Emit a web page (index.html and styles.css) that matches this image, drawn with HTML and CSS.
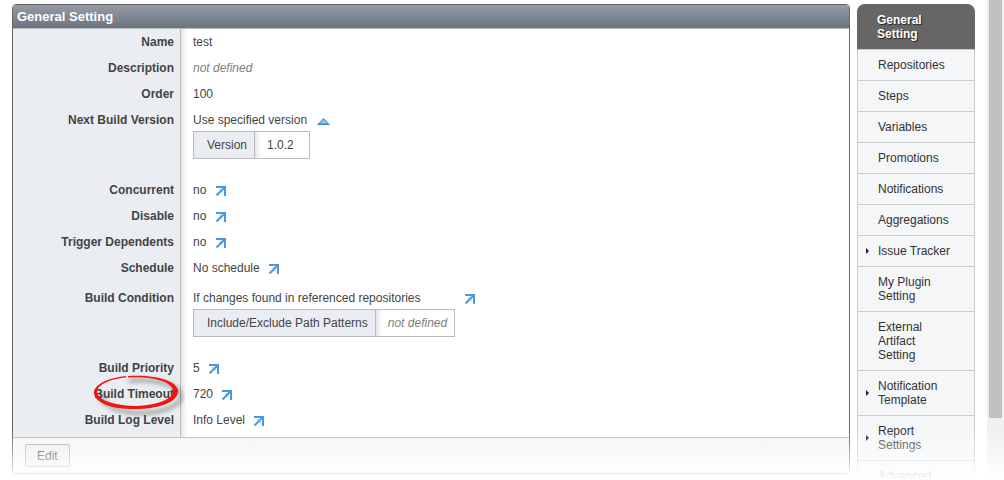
FILE: index.html
```
<!DOCTYPE html>
<html lang="en">
<head>
    <meta charset="UTF-8">
    <meta name="viewport" content="width=device-width, initial-scale=1.0">
    <title>General Setting</title>
    <link rel="stylesheet" href="styles.css">
</head>
<body>
    <svg class="sprite" aria-hidden="true">
        <symbol id="arrow" viewBox="0 0 10 10">
            <path d="M2 3H7V8Z" fill="#cfe4f8"/>
            <path d="M0 1H9V10M8.5 1.5L0.500 9.500" fill="none" stroke="#4a98e4" stroke-width="2"/>
        </symbol>
    </svg>

    <div class="page">
        <main class="panel">
            <h1 class="panel-title">General Setting</h1>
            <table class="settings">
                <tr><th scope="row">Name</th><td>test</td></tr>
                <tr><th scope="row">Description</th><td><em class="empty">not defined</em></td></tr>
                <tr><th scope="row">Order</th><td>100</td></tr>
                <tr>
                    <th scope="row">Next Build Version</th>
                    <td>
                        Use specified version
                        <a class="toggle" href="#version" aria-label="Collapse">
                            <svg viewBox="0 0 13 7"><path d="M0 7L6.5 0L13 7Z" fill="#4189c4"/><path d="M2.500 5.500L6.500 1.300L10.500 5.500Z" fill="#8ccbf0"/></svg>
                        </a>
                        <table class="nested" id="version">
                            <tr><th scope="row">Version</th><td>1.0.2</td></tr>
                        </table>
                    </td>
                </tr>
                <tr><th scope="row">Concurrent</th><td>no <a class="jump" href="#" aria-label="Override"><svg><use href="#arrow"/></svg></a></td></tr>
                <tr><th scope="row">Disable</th><td>no <a class="jump" href="#" aria-label="Override"><svg><use href="#arrow"/></svg></a></td></tr>
                <tr><th scope="row">Trigger Dependents</th><td>no <a class="jump" href="#" aria-label="Override"><svg><use href="#arrow"/></svg></a></td></tr>
                <tr><th scope="row">Schedule</th><td>No schedule <a class="jump" href="#" aria-label="Override"><svg><use href="#arrow"/></svg></a></td></tr>
                <tr class="condition">
                    <th scope="row">Build Condition</th>
                    <td>
                        <div class="inherited">
                            <div>
                                If changes found in referenced repositories
                                <table class="nested">
                                    <tr><th scope="row">Include/Exclude Path Patterns</th><td><em class="empty">not defined</em></td></tr>
                                </table>
                            </div>
                            <a class="jump" href="#" aria-label="Override"><svg><use href="#arrow"/></svg></a>
                        </div>
                    </td>
                </tr>
                <tr><th scope="row">Build Priority</th><td>5 <a class="jump" href="#" aria-label="Override"><svg><use href="#arrow"/></svg></a></td></tr>
                <tr>
                    <th scope="row">
                        <span class="marked">Build Timeout
                            <svg class="marker" viewBox="0 0 92 44" aria-hidden="true">
                                <path class="marker-shadow" d="M36 8C62 5 87 12 88 23C89 34 64 41 43 40C23 39 7 31 8 20"/>
                                <path d="M33 3C13 5 1 12 1 20C2 31 22 37 46 36C68 35 85 29 85 18C85 8 62 1 35 3L35 4.500C60 3 80 9 80 18C80 27 62 32 44 33C24 33 6 28 4 20C3 13 15 6 33 4.500Z" fill="#f3130f"/>
                            </svg>
                        </span>
                    </th>
                    <td>720 <a class="jump" href="#" aria-label="Override"><svg><use href="#arrow"/></svg></a></td>
                </tr>
                <tr><th scope="row">Build Log Level</th><td>Info Level <a class="jump" href="#" aria-label="Override"><svg><use href="#arrow"/></svg></a></td></tr>
            </table>
            <div class="panel-footer">
                <button type="button" class="edit-btn">Edit</button>
            </div>
        </main>

        <nav class="side">
            <a class="active" href="#">General Setting</a>
            <a href="#">Repositories</a>
            <a href="#">Steps</a>
            <a href="#">Variables</a>
            <a href="#">Promotions</a>
            <a href="#">Notifications</a>
            <a href="#">Aggregations</a>
            <a class="parent" href="#">Issue Tracker</a>
            <a href="#">My Plugin Setting</a>
            <a href="#">External Artifact Setting</a>
            <a class="parent" href="#">Notification Template</a>
            <a class="parent" href="#">Report Settings</a>
            <a href="#">Advanced</a>
        </nav>

        <div class="scroll-track"><div class="scroll-thumb"></div></div>
    </div>
</body>
</html>
```

FILE: styles.css
```
body {
    margin: 0;
    background: #fff;
    color: #444;
    font-family: Arial, "Liberation Sans", sans-serif;
    font-size: 12px;
    line-height: 14px;
}
a {
    color: inherit;
    text-decoration: none;
}
.sprite {
    display: none;
}
.page {
    position: relative;
    display: flex;
    align-items: flex-start;
    height: 100vh;
    padding-left: 12px;
    box-sizing: border-box;
    overflow: hidden;
}
/* fade out at the bottom edge */
.page::after {
    content: "";
    position: absolute;
    left: 0;
    right: 0;
    bottom: 0;
    height: 50px;
    background: linear-gradient(rgba(255,255,255,0), #fff);
    pointer-events: none;
}

/* main panel */
.panel {
    flex: 1;
    margin-top: 4px;
    border: 1px solid #666;
    border-radius: 4px;
    overflow: hidden;
}
.panel-title {
    margin: 0;
    padding: 3px 4px;
    border-bottom: 1px solid #bbb;
    background: linear-gradient(#969ca6, #6b747f);
    color: #fff;
    font-size: 13px;
    line-height: 17px;
}
.settings {
    width: 100%;
    border-collapse: separate;
    border-spacing: 0;
    border-bottom: 1px solid #bbb;
}
.settings th,
.settings td {
    padding: 6px;
    vertical-align: top;
}
.settings th {
    border-right: 1px solid #bbb;
    background: #eaedf2;
}
.settings td {
    padding-left: 12px;
    background: linear-gradient(90deg, #e4e4e4, #fff 6px);
}
.settings > tbody > tr > th {
    width: 155px;
    text-align: right;
}
.settings > tbody > tr:last-child > * {
    padding-bottom: 10px;
}
.settings > tbody > .condition > * {
    padding-top: 10px;
}

/* settings inside a setting */
.settings .nested {
    margin: 4px 0 12px;
    border: 1px solid #bbb;
    border-spacing: 0;
}
.settings .nested th {
    padding: 6px 7px 6px 13px;
    font-weight: normal;
}
.settings .nested td {
    min-width: 35px;
    padding: 6px 7px 6px 12px;
}
.empty {
    color: #808080;
}
.inherited {
    display: flex;
    gap: 4px;
}
.jump svg {
    width: 10px;
    height: 10px;
    margin-left: 6px;
    vertical-align: -2px;
}
.toggle svg {
    width: 13px;
    height: 7px;
    margin-left: 7px;
    vertical-align: -1px;
}
.marked {
    position: relative;
}
.marker {
    position: absolute;
    left: -1px;
    top: -14px;
    width: 92px;
    height: 44px;
}
.marker-shadow {
    fill: none;
    stroke: rgba(0,0,0,.3);
    stroke-width: 4;
    filter: blur(2px);
}
.panel-footer {
    padding: 6px 12px;
    background: #f5f5f5;
}
.edit-btn {
    height: 23px;
    padding: 0 11px;
    border: 1px solid #aaa;
    border-radius: 2px;
    background: #eee;
    color: #333;
    font: inherit;
}

/* right hand menu */
.side {
    width: 118px;
    margin: 4px 12px 0 7px;
}
.side a {
    display: block;
    padding: 8px 20px;
    border: 1px solid #ccc;
    border-top: 0;
    background: #f4f6f8;
    color: #333;
}
.side .active {
    padding: 9px 19px 8px;
    border-color: #666 #666 #ccc;
    border-radius: 8px 8px 0 0;
    background: #666;
    color: #fff;
    font-weight: bold;
    text-shadow: 1px 1px 1px #222;
}
.side .parent {
    display: flex;
    align-items: center;
    gap: 9px;
    padding-left: 8px;
}
.side .parent::before {
    content: "";
    border: 3px solid transparent;
    border-left-color: #222;
    border-right: 0;
}

.scroll-track {
    align-self: stretch;
    width: 17px;
    background: #f0f0f0;
}
.scroll-thumb {
    height: 418px;
    margin: 0 2px;
    background: #c1c1c1;
}
```
